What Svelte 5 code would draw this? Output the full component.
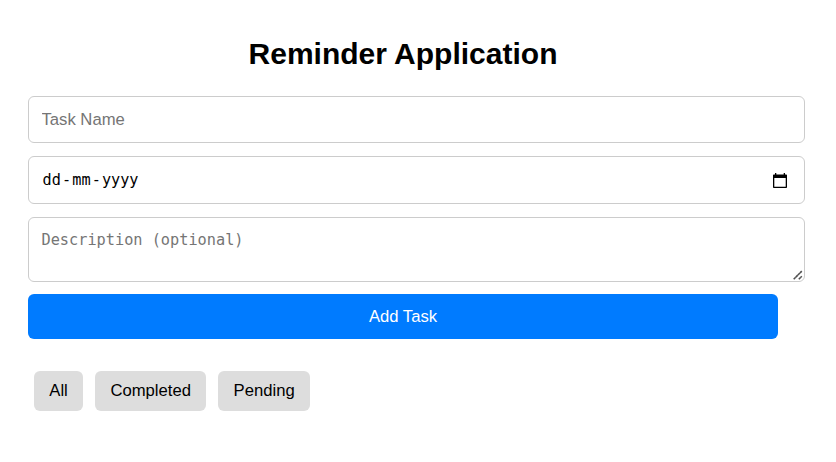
<script>
  const filters = ['All', 'Completed', 'Pending'];
  let name = $state('');
  let description = $state('');
</script>

<main>
  <h1>Reminder Application</h1>
  <form onsubmit={(e) => e.preventDefault()}>
    <input class="field" type="text" placeholder="Task Name" bind:value={name} />
    <div class="field date">
      <span class="value"><span class="part">dd</span>-<span class="part">mm</span>-<span class="part">yyyy</span></span>
      <svg width="14" height="15" viewBox="0 0 14 15" aria-hidden="true">
        <path d="M0 2.2Q0 1.4 .8 1.4H2V0H3.3V1.4H10.7V0H12V1.4H13.2Q14 1.4 14 2.2V14.2Q14 15 13.2 15H.8Q0 15 0 14.2ZM1.3 5V13.7H12.7V5Z" fill="#000" fill-rule="evenodd" />
      </svg>
    </div>
    <div class="area">
      <textarea class="field" placeholder="Description (optional)" bind:value={description}></textarea>
      <svg class="grip" width="10" height="10" viewBox="0 0 10 10" aria-hidden="true">
        <path d="M.7 9.2L8.8 1.1M5.8 9.2L8.8 6.2" stroke="#505050" stroke-width="1.6" stroke-dasharray="2.8 .2" fill="none" />
      </svg>
    </div>
    <button class="add" type="submit">Add Task</button>
  </form>
  <nav>
    {#each filters as filter}
      <button type="button">{filter}</button>
    {/each}
  </nav>
</main>

<style>
  :global(body) {
    background: #fff;
  }
  main {
    width: 750px;
    padding: 35px 0 0 28px;
    font-family: "Liberation Sans", Arial, sans-serif;
    color: #000;
  }
  h1 {
    margin: 0 0 23px;
    height: 38px;
    line-height: 38px;
    font-size: 30px;
    text-align: center;
    white-space: nowrap;
  }
  .field {
    display: block;
    box-sizing: border-box;
    width: 777px;
    height: 47px;
    margin: 0 0 13px;
    padding: 0 12.5px;
    border: 1px solid #ccc;
    border-radius: 6px;
    background: #fff;
    font: 16.67px "Liberation Sans", Arial, sans-serif;
    outline: none;
  }
  .field::placeholder {
    color: #757575;
    opacity: 1;
  }
  .date {
    display: flex;
    align-items: center;
    justify-content: space-between;
    height: 48px;
    padding: 0 17px 0 12.5px;
    font: 15.2px/20px "DejaVu Sans Mono", monospace;
  }
  .value {
    padding-bottom: 1px;
  }
  .part {
    padding: 0 1.1px;
  }
  .area {
    position: relative;
    width: 777px;
  }
  textarea.field {
    height: 65px;
    margin-bottom: 12px;
    padding: 12px 12.5px;
    resize: none;
    font: 15.25px/20px "DejaVu Sans Mono", monospace;
  }
  .grip {
    position: absolute;
    right: 2px;
    bottom: 2px;
  }
  button {
    border: 0;
    border-radius: 6px;
    font: 16.67px "Liberation Sans", Arial, sans-serif;
    cursor: pointer;
  }
  .add {
    display: block;
    width: 750px;
    height: 45px;
    background: #007bff;
    color: #fff;
  }
  nav {
    display: flex;
    gap: 12px;
    margin: 32px 0 0 6px;
  }
  nav button {
    height: 40px;
    padding: 0 15.3px;
    background: #ddd;
    color: #000;
  }
</style>
